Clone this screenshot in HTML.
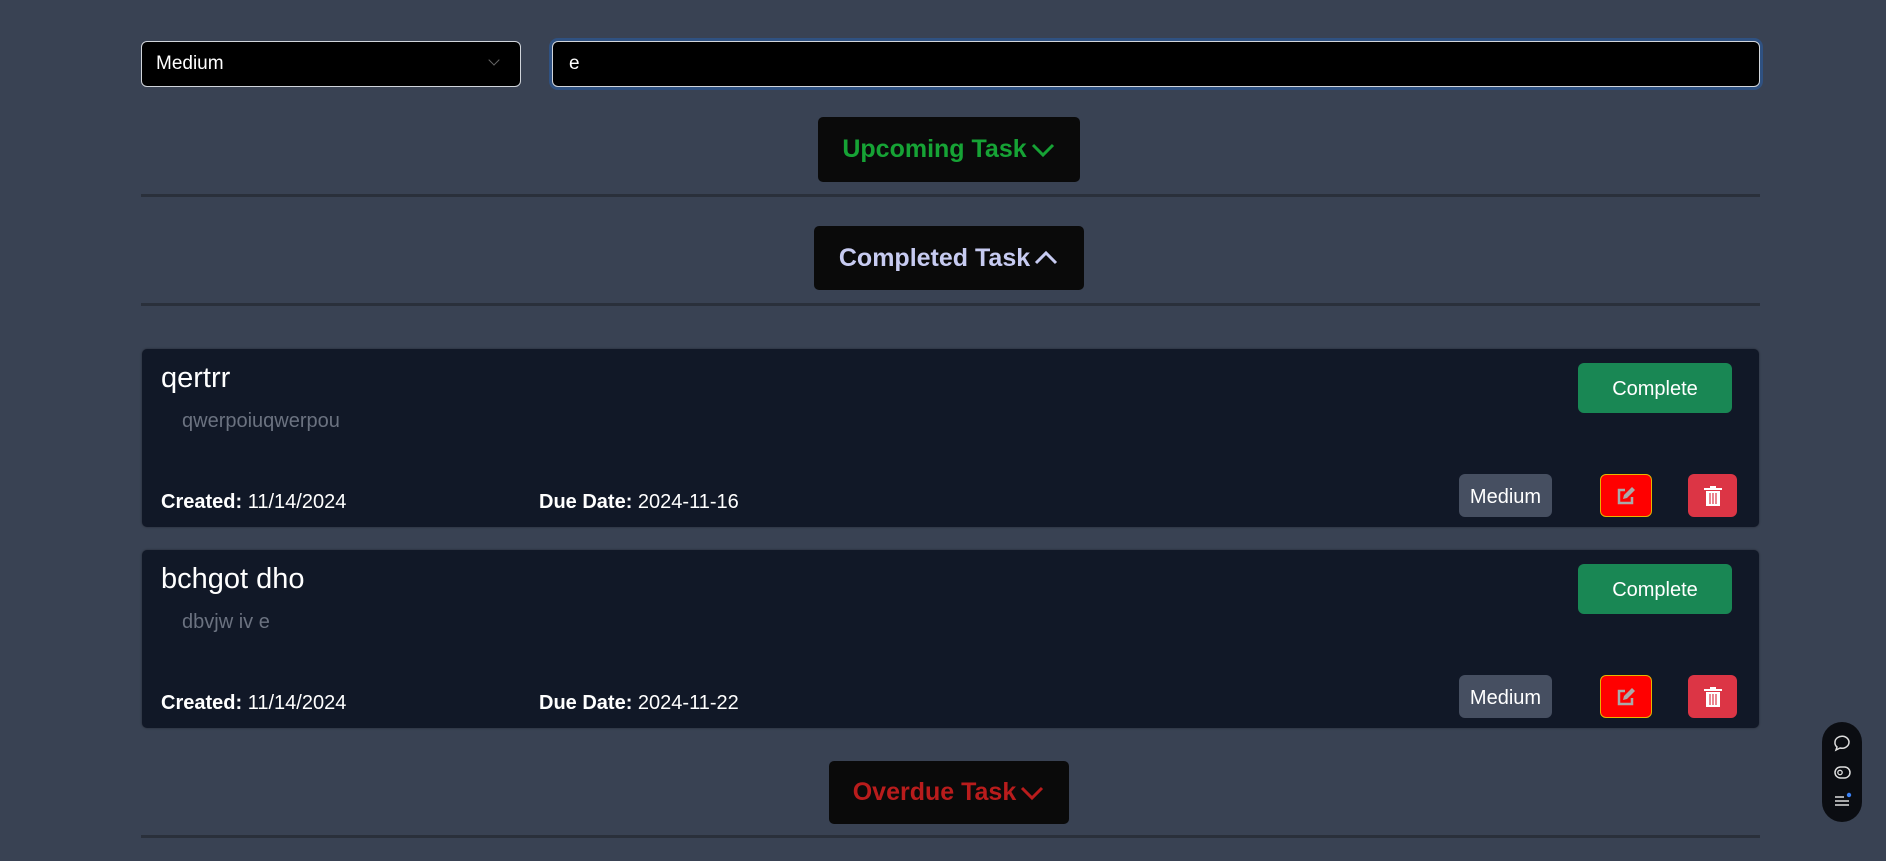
<!DOCTYPE html>
<html><head><meta charset="utf-8"><style>
*{box-sizing:border-box;margin:0;padding:0}
body{width:1886px;height:861px;background:#394253;font-family:"Liberation Sans",sans-serif;position:relative;overflow:hidden;color:#fff}
.abs{position:absolute}
.sel{left:141px;top:41px;width:380px;height:46px;background:#000;border:1px solid #d1d5db;border-radius:6px;font-size:19px;padding:11px 0 0 14px}
.sel:after{content:"";position:absolute;right:22px;top:14px;width:7px;height:7px;border-right:1px solid #666;border-bottom:1px solid #666;transform:rotate(45deg)}
.inp{left:552px;top:41px;width:1208px;height:46px;background:#000;border:1px solid #d1d5db;border-radius:6px;box-shadow:0 0 0 3px #2f5181;font-size:19px;padding:11px 0 0 16px}
.tb{background:#0a0a0a;border-radius:5px;font-weight:bold;font-size:25px;display:flex;align-items:center;justify-content:center}
.line{left:141px;width:1619px;height:3px;background:#2a303b}
.card{left:142px;width:1617px;height:178px;background:#111827;border-radius:5px;box-shadow:0 0 2px rgba(0,0,0,.4)}
.title{left:19px;top:13px;font-size:29px}
.desc{left:40px;top:61px;font-size:20px;color:#6b7280}
.meta{top:142px;font-size:20px}
.btn{border-radius:6px;display:flex;align-items:center;justify-content:center;font-size:20px;padding-top:3px}
</style></head><body>
<div class="abs sel">Medium</div>
<div class="abs inp">e</div>
<div class="abs tb" style="left:818px;top:117px;width:262px;height:65px;color:#16a335">Upcoming Task<svg width="26" height="20" viewBox="0 0 26 20" style="margin-left:3px"><path d="M3 5l10 10 10-10" stroke="#16a335" stroke-width="3" fill="none"/></svg></div>
<div class="abs line" style="top:194px"></div>
<div class="abs tb" style="left:814px;top:226px;width:270px;height:64px;color:#c7cbf1">Completed Task<svg width="26" height="20" viewBox="0 0 26 20" style="margin-left:3px"><path d="M3 15l10-10 10 10" stroke="#c7cbf1" stroke-width="3" fill="none"/></svg></div>
<div class="abs line" style="top:303px"></div>

<div class="abs card" style="top:349px">
<div class="abs title">qertrr</div>
<div class="abs desc">qwerpoiuqwerpou</div>
<div class="abs meta" style="left:19px"><b>Created:</b> 11/14/2024</div>
<div class="abs meta" style="left:397px"><b>Due Date:</b> 2024-11-16</div>
<div class="abs btn" style="left:1436px;top:14px;width:154px;height:50px;background:#198754">Complete</div>
<div class="abs btn" style="left:1317px;top:125px;width:93px;height:43px;background:#464f61">Medium</div>
<div class="abs btn" style="left:1458px;top:125px;width:52px;height:43px;background:#f00;border:1px solid #e8b400;padding:0"><svg width="22" height="22" viewBox="0 0 22 22"><path d="M10 5H4v13h13v-6" stroke="#a9a9a9" stroke-width="2.5" fill="none"/><path d="M8 14l1-4 8-8 3 3-8 8z" fill="#a9a9a9"/></svg></div>
<div class="abs btn" style="left:1546px;top:125px;width:49px;height:43px;background:#dc3545;padding:0"><svg width="20" height="22" viewBox="0 0 20 22"><path d="M1 3h18v2H1zM7 1h6v2H7z" fill="#fff"/><path d="M3 6h14v15H3z" fill="#fff"/><path d="M7 8v11M10 8v11M13 8v11" stroke="#dc3545" stroke-width="1.2"/></svg></div>
</div>

<div class="abs card" style="top:550px">
<div class="abs title">bchgot dho</div>
<div class="abs desc">dbvjw iv e</div>
<div class="abs meta" style="left:19px"><b>Created:</b> 11/14/2024</div>
<div class="abs meta" style="left:397px"><b>Due Date:</b> 2024-11-22</div>
<div class="abs btn" style="left:1436px;top:14px;width:154px;height:50px;background:#198754">Complete</div>
<div class="abs btn" style="left:1317px;top:125px;width:93px;height:43px;background:#464f61">Medium</div>
<div class="abs btn" style="left:1458px;top:125px;width:52px;height:43px;background:#f00;border:1px solid #e8b400;padding:0"><svg width="22" height="22" viewBox="0 0 22 22"><path d="M10 5H4v13h13v-6" stroke="#a9a9a9" stroke-width="2.5" fill="none"/><path d="M8 14l1-4 8-8 3 3-8 8z" fill="#a9a9a9"/></svg></div>
<div class="abs btn" style="left:1546px;top:125px;width:49px;height:43px;background:#dc3545;padding:0"><svg width="20" height="22" viewBox="0 0 20 22"><path d="M1 3h18v2H1zM7 1h6v2H7z" fill="#fff"/><path d="M3 6h14v15H3z" fill="#fff"/><path d="M7 8v11M10 8v11M13 8v11" stroke="#dc3545" stroke-width="1.2"/></svg></div>
</div>

<div class="abs tb" style="left:829px;top:761px;width:240px;height:63px;color:#b91c1c">Overdue Task<svg width="26" height="20" viewBox="0 0 26 20" style="margin-left:3px"><path d="M3 5l10 10 10-10" stroke="#b91c1c" stroke-width="3" fill="none"/></svg></div>
<div class="abs line" style="top:835px"></div>

<div class="abs" style="left:1822px;top:722px;width:40px;height:100px;background:#0b0d12;border-radius:20px">
<svg width="40" height="100" viewBox="0 0 40 100"><path d="M13 20a7 6 0 1 1 5 6l-4 2 1-3a7 6 0 0 1-2-5z" stroke="#ddd" stroke-width="1.5" fill="none"/><rect x="13" y="45" width="15" height="11" rx="5.5" stroke="#ddd" stroke-width="1.5" fill="none"/><circle cx="18" cy="50.5" r="2.2" stroke="#ddd" stroke-width="1.3" fill="none"/><path d="M13 75h9M13 79h14M13 83h14" stroke="#ddd" stroke-width="1.5"/><circle cx="27" cy="73" r="2.2" fill="#3b82f6"/></svg>
</div>
</body></html>
